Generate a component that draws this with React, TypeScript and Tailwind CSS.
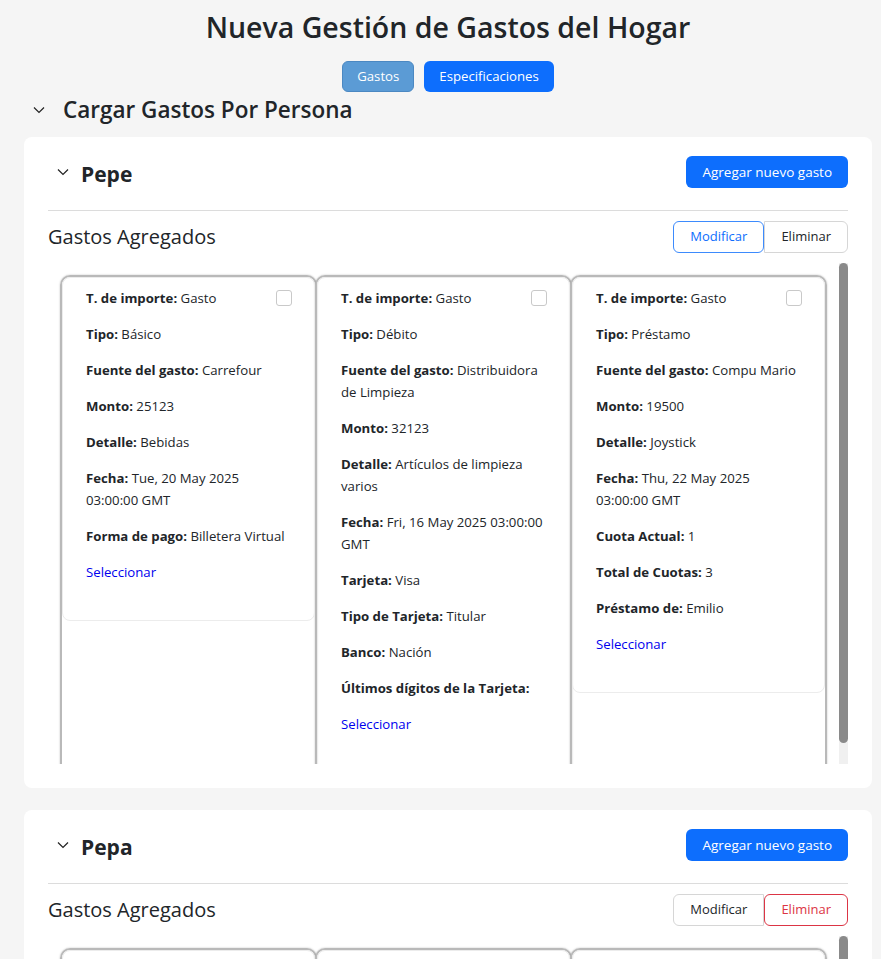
import React from "react";

type Row = { label: string; value?: string };
type Gasto = { rows: Row[] };

const gastos: Gasto[] = [
  {
    rows: [
      { label: "T. de importe", value: "Gasto" },
      { label: "Tipo", value: "Básico" },
      { label: "Fuente del gasto", value: "Carrefour" },
      { label: "Monto", value: "25123" },
      { label: "Detalle", value: "Bebidas" },
      { label: "Fecha", value: "Tue, 20 May 2025 03:00:00 GMT" },
      { label: "Forma de pago", value: "Billetera Virtual" },
    ],
  },
  {
    rows: [
      { label: "T. de importe", value: "Gasto" },
      { label: "Tipo", value: "Débito" },
      { label: "Fuente del gasto", value: "Distribuidora de Limpieza" },
      { label: "Monto", value: "32123" },
      { label: "Detalle", value: "Artículos de limpieza varios" },
      { label: "Fecha", value: "Fri, 16 May 2025 03:00:00 GMT" },
      { label: "Tarjeta", value: "Visa" },
      { label: "Tipo de Tarjeta", value: "Titular" },
      { label: "Banco", value: "Nación" },
      { label: "Últimos dígitos de la Tarjeta" },
    ],
  },
  {
    rows: [
      { label: "T. de importe", value: "Gasto" },
      { label: "Tipo", value: "Préstamo" },
      { label: "Fuente del gasto", value: "Compu Mario" },
      { label: "Monto", value: "19500" },
      { label: "Detalle", value: "Joystick" },
      { label: "Fecha", value: "Thu, 22 May 2025 03:00:00 GMT" },
      { label: "Cuota Actual", value: "1" },
      { label: "Total de Cuotas", value: "3" },
      { label: "Préstamo de", value: "Emilio" },
    ],
  },
];

function Chevron() {
  return (
    <svg width="12" height="8" viewBox="0 0 12 8" fill="none" stroke="#222" strokeWidth="1.2">
      <polyline points="1,1.5 6,6.5 11,1.5" />
    </svg>
  );
}

function GastoCard({ gasto, first }: { gasto: Gasto; first?: boolean }) {
  return (
    <div
      className={`w-[257px] shrink-0 rounded-t-[10px] border-2 border-[#b9b9b9] shadow-[0_0_2px_rgba(0,0,0,0.25)] ${first ? "" : "-ml-[2px]"}`}
    >
      <div className="relative rounded-lg border border-[#ececec] pt-[9px] pb-[37px] pl-[23px] pr-[21px]">
        <div className="absolute top-[12px] right-[22px] h-4 w-4 rounded-[3px] border border-[#c9c9c9] bg-white" />
        {gasto.rows.map((r, i) => (
          <p key={i} className="mb-[14px] text-[13.2px] leading-[22px]">
            <b className="font-bold">{r.label}:</b>
            {r.value ? ` ${r.value}` : ""}
          </p>
        ))}
        <p className="text-[13.2px] leading-[22px] text-[#0000ee]">Seleccionar</p>
      </div>
    </div>
  );
}

function Persona({ name, eliminarActivo }: { name: string; eliminarActivo?: boolean }) {
  return (
    <div className="rounded-lg bg-white px-6 pt-[19px] pb-6">
      <div className="flex items-center justify-between">
        <div className="flex items-center gap-[12px] pl-[9px]">
          <Chevron />
          <h4 className="pt-[4px] text-[21px] font-bold leading-[26px]">{name}</h4>
        </div>
        <button className="h-8 rounded-md bg-[#0d6efd] px-4 text-[13.5px] text-white">Agregar nuevo gasto</button>
      </div>
      <div className="mt-[22px] border-t border-[#dcdcdc]" />
      <div className="mt-[10px] flex items-center justify-between">
        <h5 className="text-[20px] font-medium leading-[30px]">Gastos Agregados</h5>
        <div className="flex">
          {eliminarActivo ? (
            <>
              <button className="h-8 rounded-l-md border border-[#d6d6d6] px-4 text-[13px] text-[#212529]">Modificar</button>
              <button className="h-8 rounded-md border border-[#dc3545] px-4 text-[13px] text-[#dc3545]">Eliminar</button>
            </>
          ) : (
            <>
              <button className="h-8 rounded-md border border-[#3d8bfd] px-4 text-[13px] text-[#0d6efd]">Modificar</button>
              <button className="h-8 rounded-r-md border border-[#d6d6d6] px-4 text-[13px] text-[#212529]">Eliminar</button>
            </>
          )}
        </div>
      </div>
      <div className="mt-[10px] flex h-[501px] overflow-hidden">
        <div className="flex-1 overflow-hidden">
          <div className="flex justify-center px-[10px] pt-[12px] pb-[40px]">
            {gastos.map((g, i) => (
              <GastoCard key={i} gasto={g} first={i === 0} />
            ))}
          </div>
        </div>
        <div className="w-[9px] bg-[#f0f0f0]">
          <div className="h-[480px] rounded-full bg-[#8a8a8a]" />
        </div>
      </div>
    </div>
  );
}

export default function App() {
  return (
    <div className="h-[959px] w-full overflow-hidden bg-[#f5f5f5] font-['Open_Sans',sans-serif] text-[#212529]">
      <div className="w-[896px]">
        <h2 className="pt-[10px] text-center text-[28.5px] font-semibold leading-[35px]">Nueva Gestión de Gastos del Hogar</h2>
        <div className="mt-[16px] flex justify-center gap-[10px]">
          <button className="h-[31px] rounded-md border border-[#4b88c2] bg-[#5b9bd5] px-[14px] text-[13.2px] text-white">Gastos</button>
          <button className="h-[31px] rounded-md bg-[#0d6efd] px-[15px] text-[13.2px] text-white">Especificaciones</button>
        </div>
        <div className="mt-[4px] flex items-center gap-[18px] pl-[33px]">
          <Chevron />
          <h4 className="text-[22.5px] font-semibold leading-[28px]">Cargar Gastos Por Persona</h4>
        </div>
        <div className="mt-[13px] flex flex-col gap-[22px] px-6">
          <Persona name="Pepe" />
          <Persona name="Pepa" eliminarActivo />
        </div>
      </div>
    </div>
  );
}
